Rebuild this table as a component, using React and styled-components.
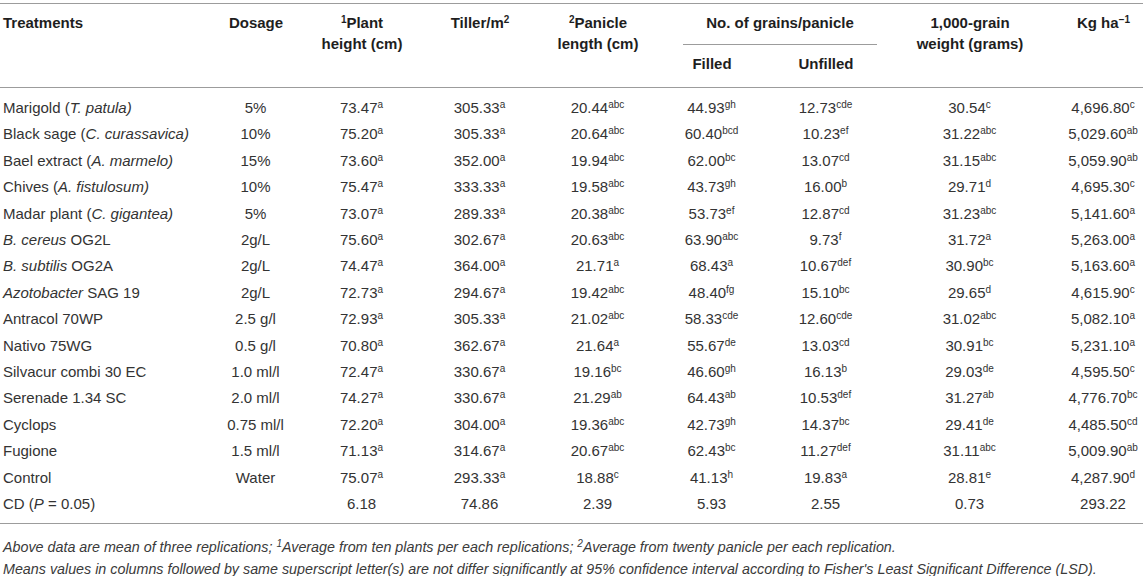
import React from 'react';
import styled, { createGlobalStyle } from 'styled-components';

const Global = createGlobalStyle`
  html, body { margin: 0; padding: 0; background: #fff; }
  body { font-family: "Liberation Sans", Arial, sans-serif; }
`;

const Page = styled.div`
  width: 1143px;
  padding-top: 3px;
`;

const Table = styled.table`
  width: 1143px;
  table-layout: fixed;
  border-collapse: collapse;
  border-top: 1px solid #9c9c9c;
  border-bottom: 1px solid #9c9c9c;
  font-size: 15px;
  color: #333;
`;

const HeadRow = styled.tr``;

const HeadCell = styled.th`
  text-align: ${(p) => p.$align || 'center'};
  vertical-align: top;
  padding: 7.5px 0 0 ${(p) => (p.$align === 'left' ? '3px' : '0')};
  font-weight: bold;
  line-height: 21px;
  color: #1e1e1e;
  border-bottom: ${(p) => (p.$last ? '1px solid #9c9c9c' : 'none')};
`;

const GroupCell = styled.th`
  padding: 7.5px 0 0;
  font-weight: bold;
  line-height: 21px;
  color: #1e1e1e;
  vertical-align: top;
`;

const GroupLabel = styled.div`
  margin-left: 35px;
  margin-right: -1px;
  padding-bottom: 11.5px;
  border-bottom: 1px solid #9c9c9c;
  text-align: center;
`;

const SubHeadCell = styled.th`
  padding: 7.5px 0 13.5px;
  font-weight: bold;
  line-height: 21px;
  color: #1e1e1e;
  text-align: center;
  border-bottom: 1px solid #9c9c9c;
`;

const Row = styled.tr`
  & > td {
    padding-top: ${(p) => (p.$first ? '7px' : '0')};
    padding-bottom: ${(p) => (p.$last ? '5px' : '0')};
  }
`;

const Cell = styled.td`
  height: 26.4px;
  line-height: 26.4px;
  text-align: ${(p) => p.$align || 'center'};
  padding-left: ${(p) => (p.$align === 'left' ? '3px' : '0')};
  white-space: nowrap;
  vertical-align: top;
`;

const Sup = styled.sup`
  font-size: 10px;
  line-height: 0;
  vertical-align: 5px;
`;

const Footnotes = styled.div`
  padding: 12px 0 0 3px;
  font-size: 14.3px;
  font-style: italic;
  line-height: 22px;
  color: #3a3a3a;
`;

const Note = styled.div`
  white-space: nowrap;
`;

const Val = ({ v }) => {
  if (!Array.isArray(v)) return v;
  return (
    <>
      {v[0]}
      {v[1] && <Sup>{v[1]}</Sup>}
    </>
  );
};

const rows = [
  [<>Marigold (<i>T. patula)</i></>, '5%', ['73.47', 'a'], ['305.33', 'a'], ['20.44', 'abc'], ['44.93', 'gh'], ['12.73', 'cde'], ['30.54', 'c'], ['4,696.80', 'c']],
  [<>Black sage (<i>C. curassavica)</i></>, '10%', ['75.20', 'a'], ['305.33', 'a'], ['20.64', 'abc'], ['60.40', 'bcd'], ['10.23', 'ef'], ['31.22', 'abc'], ['5,029.60', 'ab']],
  [<>Bael extract (<i>A. marmelo)</i></>, '15%', ['73.60', 'a'], ['352.00', 'a'], ['19.94', 'abc'], ['62.00', 'bc'], ['13.07', 'cd'], ['31.15', 'abc'], ['5,059.90', 'ab']],
  [<>Chives (<i>A. fistulosum)</i></>, '10%', ['75.47', 'a'], ['333.33', 'a'], ['19.58', 'abc'], ['43.73', 'gh'], ['16.00', 'b'], ['29.71', 'd'], ['4,695.30', 'c']],
  [<>Madar plant (<i>C. gigantea)</i></>, '5%', ['73.07', 'a'], ['289.33', 'a'], ['20.38', 'abc'], ['53.73', 'ef'], ['12.87', 'cd'], ['31.23', 'abc'], ['5,141.60', 'a']],
  [<><i>B. cereus</i> OG2L</>, '2g/L', ['75.60', 'a'], ['302.67', 'a'], ['20.63', 'abc'], ['63.90', 'abc'], ['9.73', 'f'], ['31.72', 'a'], ['5,263.00', 'a']],
  [<><i>B. subtilis</i> OG2A</>, '2g/L', ['74.47', 'a'], ['364.00', 'a'], ['21.71', 'a'], ['68.43', 'a'], ['10.67', 'def'], ['30.90', 'bc'], ['5,163.60', 'a']],
  [<><i>Azotobacter</i> SAG 19</>, '2g/L', ['72.73', 'a'], ['294.67', 'a'], ['19.42', 'abc'], ['48.40', 'fg'], ['15.10', 'bc'], ['29.65', 'd'], ['4,615.90', 'c']],
  ['Antracol 70WP', '2.5 g/l', ['72.93', 'a'], ['305.33', 'a'], ['21.02', 'abc'], ['58.33', 'cde'], ['12.60', 'cde'], ['31.02', 'abc'], ['5,082.10', 'a']],
  ['Nativo 75WG', '0.5 g/l', ['70.80', 'a'], ['362.67', 'a'], ['21.64', 'a'], ['55.67', 'de'], ['13.03', 'cd'], ['30.91', 'bc'], ['5,231.10', 'a']],
  ['Silvacur combi 30 EC', '1.0 ml/l', ['72.47', 'a'], ['330.67', 'a'], ['19.16', 'bc'], ['46.60', 'gh'], ['16.13', 'b'], ['29.03', 'de'], ['4,595.50', 'c']],
  ['Serenade 1.34 SC', '2.0 ml/l', ['74.27', 'a'], ['330.67', 'a'], ['21.29', 'ab'], ['64.43', 'ab'], ['10.53', 'def'], ['31.27', 'ab'], ['4,776.70', 'bc']],
  ['Cyclops', '0.75 ml/l', ['72.20', 'a'], ['304.00', 'a'], ['19.36', 'abc'], ['42.73', 'gh'], ['14.37', 'bc'], ['29.41', 'de'], ['4,485.50', 'cd']],
  ['Fugione', '1.5 ml/l', ['71.13', 'a'], ['314.67', 'a'], ['20.67', 'abc'], ['62.43', 'bc'], ['11.27', 'def'], ['31.11', 'abc'], ['5,009.90', 'ab']],
  ['Control', 'Water', ['75.07', 'a'], ['293.33', 'a'], ['18.88', 'c'], ['41.13', 'h'], ['19.83', 'a'], ['28.81', 'e'], ['4,287.90', 'd']],
  [<>CD (<i>P</i> = 0.05)</>, '', '6.18', '74.86', '2.39', '5.93', '2.55', '0.73', '293.22'],
];

const widths = [200, 112, 100, 136, 100, 128, 100, 188, 79];

export default function App() {
  return (
    <Page>
      <Global />
      <Table>
        <colgroup>
          {widths.map((w, i) => (
            <col key={i} style={{ width: w }} />
          ))}
        </colgroup>
        <thead>
          <HeadRow>
            <HeadCell rowSpan={2} $align="left" $last>Treatments</HeadCell>
            <HeadCell rowSpan={2} $last>Dosage</HeadCell>
            <HeadCell rowSpan={2} $last><Sup>1</Sup>Plant<br />height (cm)</HeadCell>
            <HeadCell rowSpan={2} $last>Tiller/m<Sup>2</Sup></HeadCell>
            <HeadCell rowSpan={2} $last><Sup>2</Sup>Panicle<br />length (cm)</HeadCell>
            <GroupCell colSpan={2}>
              <GroupLabel>No. of grains/panicle</GroupLabel>
            </GroupCell>
            <HeadCell rowSpan={2} $last>1,000-grain<br />weight (grams)</HeadCell>
            <HeadCell rowSpan={2} $last>Kg ha<Sup>−1</Sup></HeadCell>
          </HeadRow>
          <HeadRow>
            <SubHeadCell>Filled</SubHeadCell>
            <SubHeadCell>Unfilled</SubHeadCell>
          </HeadRow>
        </thead>
        <tbody>
          {rows.map((r, i) => (
            <Row key={i} $first={i === 0} $last={i === rows.length - 1}>
              {r.map((c, j) => (
                <Cell key={j} $align={j === 0 ? 'left' : 'center'}>
                  <Val v={c} />
                </Cell>
              ))}
            </Row>
          ))}
        </tbody>
      </Table>
      <Footnotes>
        <Note>
          Above data are mean of three replications; <Sup>1</Sup>Average from ten plants per each replications; <Sup>2</Sup>Average from twenty panicle per each replication.
        </Note>
        <Note>
          Means values in columns followed by same superscript letter(s) are not differ significantly at 95% confidence interval according to Fisher's Least Significant Difference (LSD).
        </Note>
      </Footnotes>
    </Page>
  );
}
